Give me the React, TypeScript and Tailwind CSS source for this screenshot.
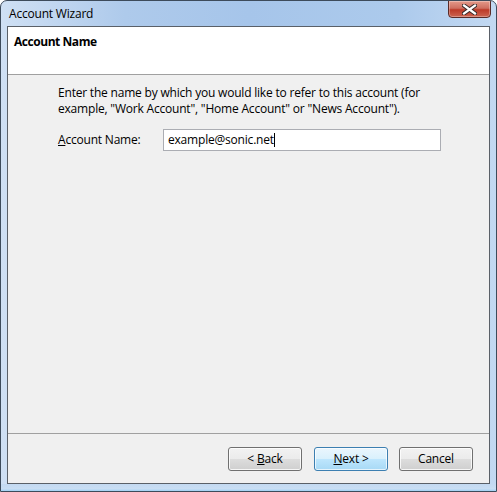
function CloseButton() {
  return (
    <div className="-mt-[1px] w-[43px] h-[18px] rounded-b-[4px] border border-[#5a2b28] bg-[linear-gradient(to_bottom,#e59a8a_0%,#cf6f60_45%,#bd3a28_55%,#cc6450_100%)] shadow-[inset_0_0_0_1px_rgba(255,255,255,0.3)] flex items-center justify-center">
      <svg width="15" height="11" viewBox="0 0 15 11">
        <path d="M2 1.5 L13 9.5 M13 1.5 L2 9.5" stroke="#3a2a2a" strokeWidth="4.2" strokeLinecap="square" />
        <path d="M2 1.5 L13 9.5 M13 1.5 L2 9.5" stroke="#ffffff" strokeWidth="2.2" strokeLinecap="square" />
      </svg>
    </div>
  );
}

function WizardButton({ children, primary, className = "" }: { children: React.ReactNode; primary?: boolean; className?: string }) {
  return (
    <button
      className={
        primary
          ? `w-[74px] h-[24px] rounded-[3px] border border-[#3c7fb1] bg-[linear-gradient(to_bottom,#eaf6fd_0%,#d9f0fc_50%,#bee6fd_50%,#a7d9f5_100%)] shadow-[inset_0_0_0_1px_rgba(255,255,255,0.7)] flex items-center justify-center ${className}`
          : `w-[74px] h-[24px] rounded-[3px] border border-[#707070] bg-[linear-gradient(to_bottom,#f2f2f2_0%,#ebebeb_50%,#dddddd_50%,#cfcfcf_100%)] shadow-[inset_0_0_0_1px_rgba(255,255,255,0.8)] flex items-center justify-center ${className}`
      }
    >
      {children}
    </button>
  );
}

export default function App() {
  return (
    <div className="w-[497px] h-[492px] bg-white font-['Open_Sans',sans-serif] text-[12px] leading-[16px] tracking-[-0.2px] text-black">
      <div className="w-full h-full flex flex-col rounded-t-[7px] border border-[#3d4b5b] bg-[linear-gradient(to_right,#cfe0f4_0%,#aecaeb_25%,#a6c5ea_50%,#accaec_80%,#c3d9f2_100%)] overflow-hidden">
        <div className="h-[25px] shrink-0 flex items-start justify-between pl-[8px] pr-[5px]">
          <span className="mt-[5px]">Account Wizard</span>
          <CloseButton />
        </div>

        <div className="mx-[6px] flex-1 flex flex-col border border-[#5a6068] bg-[#f0f0f0]">
          <div className="h-[48px] shrink-0 bg-white border-b border-[#a0a0a0] pt-[7px] pl-[6px]">
            <span className="font-bold tracking-[-0.45px]">Account Name</span>
          </div>

          <div className="flex-1 pt-[10px] pl-[50px]">
            <p>
              Enter the name by which you would like to refer to this account (for
              <br />
              example, "Work Account", "Home Account" or "News Account").
            </p>
            <div className="mt-[12px] flex items-center">
              <span className="w-[105px]">
                <span className="underline">A</span>ccount Name:
              </span>
              <div className="w-[278px] h-[22px] border border-[#abadb3] bg-white flex items-center pl-[4px]">
                <span>example@sonic.net</span>
                <span className="w-[1px] h-[14px] bg-black" />
              </div>
            </div>
          </div>

          <div className="shrink-0 border-t border-[#a0a0a0] pt-[13px] pb-[12px] pr-[16px] flex justify-end">
            <WizardButton className="mr-[12px]">
              &lt; <span className="underline ml-[3px]">B</span>ack
            </WizardButton>
            <WizardButton primary className="mr-[11px]">
              <span className="underline">N</span>ext &gt;
            </WizardButton>
            <WizardButton>Cancel</WizardButton>
          </div>
        </div>

        <div className="h-[7px] shrink-0 bg-[linear-gradient(to_bottom,#c3d9f1_0%,#c9def4_70%,#9fd0f3_100%)]" />
      </div>
    </div>
  );
}
